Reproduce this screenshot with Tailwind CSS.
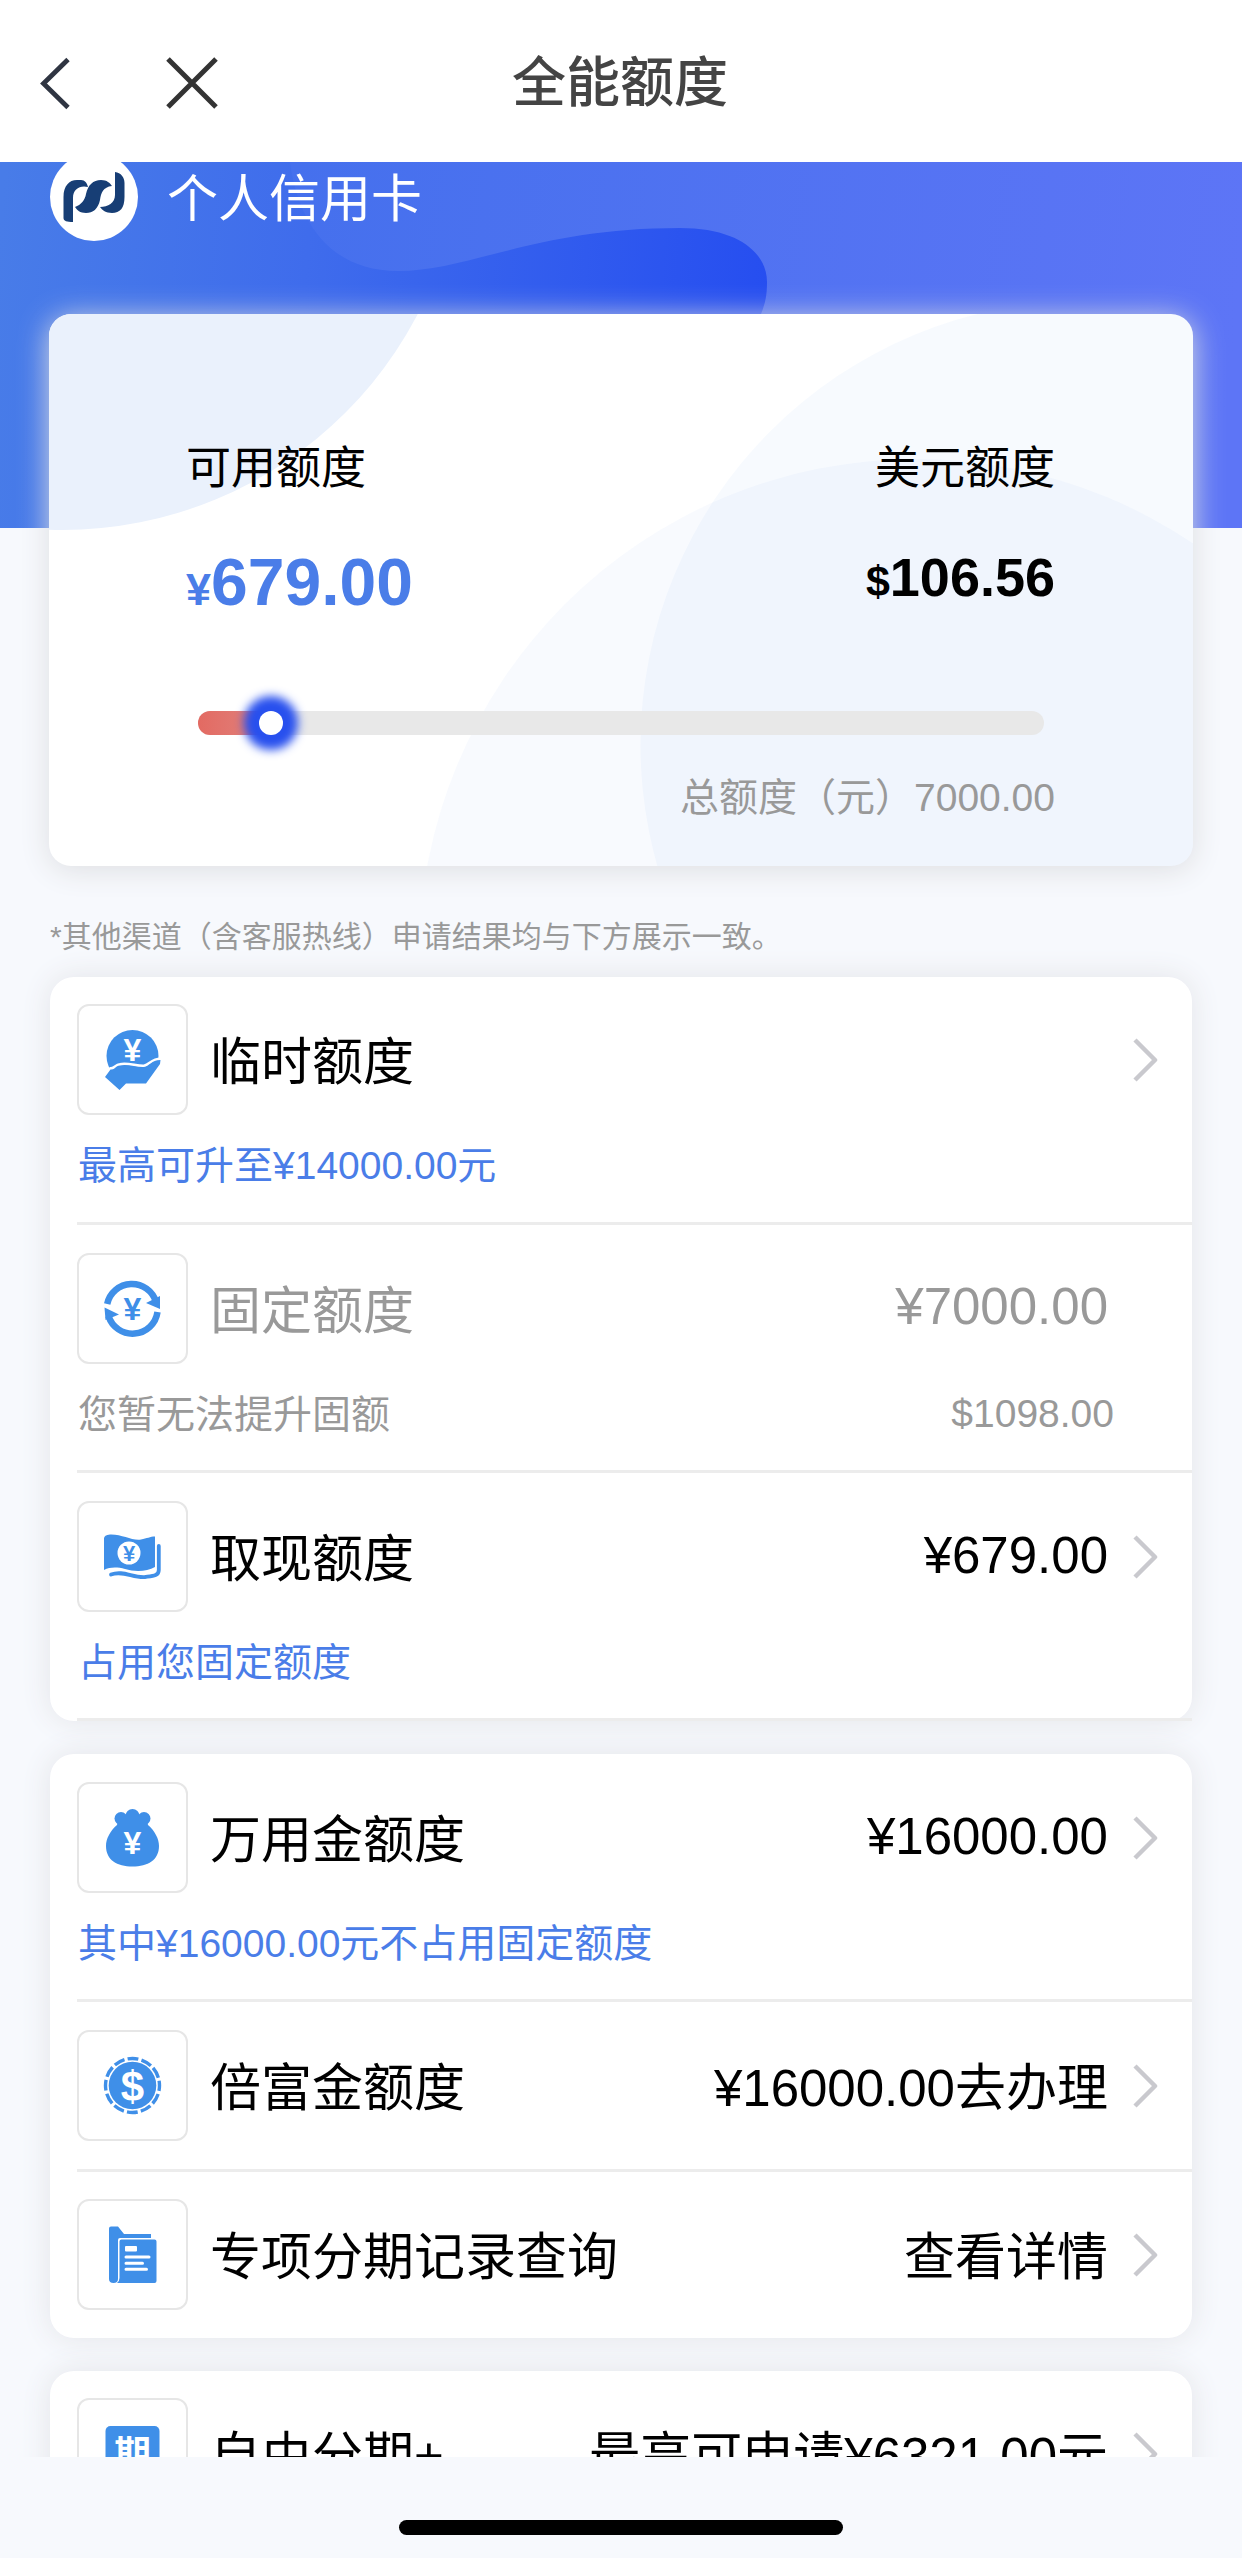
<!DOCTYPE html>
<html lang="zh-CN">
<head>
<meta charset="utf-8">
<title>全能额度</title>
<script src="https://cdn.jsdelivr.net/npm/@tailwindcss/browser@4"></script>
</head>
<body class="h-[2558px] w-[1242px] overflow-hidden bg-[#f7f9fd] font-['Liberation_Sans','Noto_Sans_CJK_SC',sans-serif] text-black">

<!-- Navigation bar -->
<header class="grid h-[162px] grid-cols-3 items-center bg-white pt-[4px]">
  <div class="flex items-center pl-[38px]">
    <svg width="34" height="56" viewBox="0 0 34 56" fill="none" stroke="#2f3542" stroke-width="4.800"><path d="M30 4.500 5.500 28.500 30 52.500"/></svg>
    <svg class="ml-[92px]" width="56" height="56" viewBox="0 0 56 56" fill="none" stroke="#333" stroke-width="5"><path d="M4 4 52 52M52 4 4 52"/></svg>
  </div>
  <h1 class="pr-[2px] text-center text-[54px] leading-[64px] font-medium text-[#444]">全能额度</h1>
</header>

<main class="relative h-[2295px] overflow-hidden">
  <!-- Blue banner behind the summary card -->
  <svg class="absolute top-0 left-0" width="1242" height="366" viewBox="0 0 1242 366">
    <defs>
      <linearGradient id="base" gradientUnits="userSpaceOnUse" x1="0" y1="60" x2="770" y2="120">
        <stop offset="0" stop-color="#487ce8"/><stop offset=".4" stop-color="#3f6cec"/><stop offset="1" stop-color="#264ef0"/>
      </linearGradient>
      <linearGradient id="wave" gradientUnits="userSpaceOnUse" x1="290" y1="0" x2="1242" y2="120">
        <stop offset="0" stop-color="#4570ed"/><stop offset="1" stop-color="#5d75f6"/>
      </linearGradient>
    </defs>
    <rect width="1242" height="366" fill="url(#base)"/>
    <path fill="url(#wave)" d="M290 0C298 60 330 109 398 109 470 109 535 66 680 66 740 66 767 92 767 120 767 135 765 142 761 152L740 366H1242V0Z"/>
  </svg>

  <section class="relative px-[49px]">
    <div class="-mt-[9px] flex h-[88px] items-center">
      <svg class="ml-[1px]" width="88" height="88" viewBox="0 0 88 88">
        <circle cx="44" cy="44" r="44" fill="#fff"/>
        <g fill="#173e75">
          <path d="M13.500 65V44C13.500 33 19 27 27 27H31C35 27 37 30 38 34 30 32 23 36 23 45V69C17 69 13.500 68 13.500 65Z"/>
          <path d="M25 54C31 52 35 47 36 41 38 32 43 27 51 27 57 27 60 30 62 33 53 34 51 40 50 47 48 56 43 60 36 60 30 60 27 57 25 54Z"/>
          <path d="M65 19C71 20 74.500 24 74.500 30V44C74.500 55 70 60 62 60 56 60 52 57 50 54 58 54 65 50 65 42Z"/>
        </g>
      </svg>
      <span class="pt-[6px] pl-[29px] text-[51px] leading-[60px] text-white">个人信用卡</span>
    </div>

    <div class="relative mt-[73px] h-[552px] rounded-[22px] bg-white pt-[125px] pr-[138px] pl-[137px] shadow-[0_4px_30px_#dddee1]">
      <svg class="absolute top-0 left-0 rounded-[22px]" width="1144" height="552" viewBox="49 314 1144 552">
        <circle cx="62" cy="129" r="401" fill="#eaf1fc"/>
        <circle cx="1084.500" cy="745" r="444" fill="#3278dc" fill-opacity=".04"/>
        <circle cx="916" cy="956" r="497" fill="#3278dc" fill-opacity=".034"/>
      </svg>
      <div class="relative">
        <div class="flex justify-between">
          <div>
            <p class="text-[45px] leading-[60px]">可用额度</p>
            <p class="mt-[43px] h-[80px] text-[66px] leading-[80px] font-bold text-[#4a7de8]"><span class="text-[45px] leading-none">¥</span>679.00</p>
          </div>
          <div class="text-right">
            <p class="text-[45px] leading-[60px]">美元额度</p>
            <p class="mt-[38px] h-[80px] text-[54px] leading-[80px] font-bold"><span class="text-[43px] leading-none">$</span>106.56</p>
          </div>
        </div>
        <div class="mt-[89px] mr-[11px] ml-[12px] flex h-[24px] items-center rounded-full bg-[#e8e8e8]">
          <div class="h-[24px] rounded-l-full bg-linear-to-r from-[#e36a62] to-[#df8480]" style="width:73px"></div>
          <div class="-ml-[12px] size-[24px] rounded-full bg-white shadow-[0_0_10px_15px_#2850ee]"></div>
        </div>
        <p class="mt-[33px] text-right text-[39px] leading-[60px] text-[#999]">总额度（元）7000.00</p>
      </div>
    </div>
  </section>

  <p class="relative mt-[51px] pl-[50px] text-[30px] leading-[40px] text-[#999]">*其他渠道（含客服热线）申请结果均与下方展示一致。</p>

  <!-- Quota list -->
  <section class="relative mx-[50px] mt-[20px] rounded-[24px] bg-white pl-[27px] shadow-[0_0_30px_#e3e4e8]">
    <article class="h-[248px] border-b-[3px] border-[#ececec] pt-[27px]">
      <div class="flex items-center pr-[34px]">
        <div class="size-[111px] rounded-[12px] border-2 border-[#e6e6e6]">
          <svg class="-m-[2px]" width="111" height="111" viewBox="0 0 111 111" fill="#3f8fe8">
            <circle cx="55.500" cy="52" r="26"/>
            <path fill="none" stroke="#fff" stroke-width="3" d="M28 71 33.500 64.500C38 65 38 61 43 60.500 50 58.500 60 62.500 67 62 73 61 74 55 84 55"/>
            <path d="M28 73 33.500 65.500C38 66 38 62 43 61.500 50 59.500 60 63.500 67 63 73 62 74 56 83.500 56L83 60 69 79.500H49L42.500 86Z"/>
            <text x="55.500" y="57" text-anchor="middle" font-size="32" font-weight="700" fill="#fff">¥</text>
          </svg>
        </div>
        <h2 class="pt-[6px] pl-[22px] text-[51px] leading-[60px]">临时额度</h2>
        <svg class="ml-auto" width="25" height="44" viewBox="0 0 25 44" fill="none" stroke="#c9c9ce" stroke-width="4.500" stroke-linejoin="round"><path d="M2 2 22 22 2 42"/></svg>
      </div>
      <p class="mt-[21px] pl-px text-[39px] leading-[60px] text-[#4a7de8]">最高可升至¥14000.00元</p>
    </article>

    <article class="h-[248px] border-b-[3px] border-[#ececec] pt-[28px] text-[#999]">
      <div class="flex items-center pr-[84px]">
        <div class="size-[111px] rounded-[12px] border-2 border-[#e6e6e6]">
          <svg class="-m-[2px]" width="111" height="111" viewBox="0 0 111 111" fill="#3f8fe8">
            <g fill="none" stroke="#3f8fe8" stroke-width="6.500">
              <path d="M30.200 51A25.200 25.200 0 0 1 79 49"/>
              <path d="M80.500 59A25.200 25.200 0 0 1 31.500 63"/>
            </g>
            <path d="M83 43V56L69 50Z"/><path d="M27.500 54.500 42 61.500 28.500 67Z"/>
            <text x="55.300" y="66.500" text-anchor="middle" font-size="32" font-weight="700">¥</text>
          </svg>
        </div>
        <h2 class="pt-[6px] pl-[22px] text-[51px] leading-[60px]">固定额度</h2>
        <span class="ml-auto pb-[3px] text-[51px] leading-[60px]">¥7000.00</span>
      </div>
      <div class="mt-[21px] flex justify-between pr-[78px] pl-px text-[39px] leading-[60px]">
        <p>您暂无法提升固额</p>
        <span class="-mt-[1px]">$1098.00</span>
      </div>
    </article>

    <article class="h-[248px] border-b-[3px] border-[#ececec] pt-[28px]">
      <div class="flex items-center pr-[34px]">
        <div class="size-[111px] rounded-[12px] border-2 border-[#e6e6e6]">
          <svg class="-m-[2px]" width="111" height="111" viewBox="0 0 111 111" fill="#3f8fe8">
            <path d="M27 37.500Q27 34 33 33.500C45 33 55 40 64 38.500 70 37.500 73 35.500 78 35.500V66C70 70.500 58 71 48 68 40 66 33 66 27 69Z"/>
            <path fill="none" stroke="#3f8fe8" stroke-width="3.800" stroke-linecap="round" d="M34 73.500C46 69 56 77 68 76 76 75 81.800 75 81.800 69V45"/>
            <ellipse cx="52" cy="52" rx="11.500" ry="11.500" fill="#fff"/>
            <text x="52" y="60" text-anchor="middle" font-size="22" font-weight="700">¥</text>
          </svg>
        </div>
        <h2 class="pt-[6px] pl-[22px] text-[51px] leading-[60px]">取现额度</h2>
        <span class="ml-auto pr-[25px] pb-[2px] text-[51px] leading-[60px]">¥679.00</span>
        <svg width="25" height="44" viewBox="0 0 25 44" fill="none" stroke="#c9c9ce" stroke-width="4.500" stroke-linejoin="round"><path d="M2 2 22 22 2 42"/></svg>
      </div>
      <p class="mt-[21px] pl-px text-[39px] leading-[60px] text-[#4a7de8]">占用您固定额度</p>
    </article>
  </section>

  <section class="relative mx-[50px] mt-[33px] rounded-[24px] bg-white pl-[27px] shadow-[0_0_30px_#e3e4e8]">
    <article class="h-[248px] border-b-[3px] border-[#ececec] pt-[28px]">
      <div class="flex items-center pr-[34px]">
        <div class="size-[111px] rounded-[12px] border-2 border-[#e6e6e6]">
          <svg class="-m-[2px]" width="111" height="111" viewBox="0 0 111 111" fill="#3f8fe8">
            <circle cx="44" cy="36.500" r="6.500"/><circle cx="55.500" cy="34" r="7"/><circle cx="67" cy="36.500" r="6.500"/>
            <path d="M42 34H69L71 43C78 49 82 57 82 64 82 78 71 84.500 55.500 84.500 40 84.500 29 78 29 64 29 57 33 49 40 43Z"/>
            <text x="55.500" y="72" text-anchor="middle" font-size="32" font-weight="700" fill="#fff">¥</text>
          </svg>
        </div>
        <h2 class="pt-[6px] pl-[22px] text-[51px] leading-[60px]">万用金额度</h2>
        <span class="ml-auto pr-[25px] pb-[2px] text-[51px] leading-[60px]">¥16000.00</span>
        <svg width="25" height="44" viewBox="0 0 25 44" fill="none" stroke="#c9c9ce" stroke-width="4.500" stroke-linejoin="round"><path d="M2 2 22 22 2 42"/></svg>
      </div>
      <p class="mt-[21px] pl-px text-[39px] leading-[60px] text-[#4a7de8]">其中¥16000.00元不占用固定额度</p>
    </article>

    <article class="h-[170px] border-b-[3px] border-[#ececec] pt-[28px]">
      <div class="flex items-center pr-[34px]">
        <div class="size-[111px] rounded-[12px] border-2 border-[#e6e6e6]">
          <svg class="-m-[2px]" width="111" height="111" viewBox="0 0 111 111" fill="#3f8fe8">
            <circle cx="55.500" cy="55.500" r="23.800"/>
            <circle cx="55.500" cy="55.500" r="27" fill="none" stroke="#3f8fe8" stroke-width="3.400" stroke-dasharray="11 3.137" stroke-dashoffset="5.500"/>
            <text x="55.500" y="70.500" text-anchor="middle" font-size="42" font-weight="700" fill="#fff">$</text>
          </svg>
        </div>
        <h2 class="pt-[6px] pl-[22px] text-[51px] leading-[60px]">倍富金额度</h2>
        <span class="ml-auto pt-[6px] pr-[25px] text-[51px] leading-[60px]">¥16000.00去办理</span>
        <svg width="25" height="44" viewBox="0 0 25 44" fill="none" stroke="#c9c9ce" stroke-width="4.500" stroke-linejoin="round"><path d="M2 2 22 22 2 42"/></svg>
      </div>
    </article>

    <article class="h-[166px] pt-[27px]">
      <div class="flex items-center pr-[34px]">
        <div class="size-[111px] rounded-[12px] border-2 border-[#e6e6e6]">
          <svg class="-m-[2px]" width="111" height="111" viewBox="0 0 111 111" fill="#3f8fe8">
            <path d="M32 29.500Q32 27.500 34 27.500H41L47 35H74V39H43Q41 39 41 41V80Q41 84 36.500 84 32 84 32 80Z"/>
            <path d="M42.500 42.500Q42.500 40.500 44.500 40.500H77.500Q79.500 40.500 79.500 42.500V82Q79.500 84 77.500 84H40Q42.500 82 42.500 79Z"/>
            <rect x="48" y="47" width="12" height="5.500" rx="1" fill="#fff"/>
            <path stroke="#fff" stroke-width="3" stroke-linecap="round" d="M49 58H72M49 64.300H65.500M49 70.300H69.500"/>
          </svg>
        </div>
        <h2 class="pt-[6px] pl-[22px] text-[51px] leading-[60px]">专项分期记录查询</h2>
        <span class="ml-auto pt-[6px] pr-[25px] text-[51px] leading-[60px]">查看详情</span>
        <svg width="25" height="44" viewBox="0 0 25 44" fill="none" stroke="#c9c9ce" stroke-width="4.500" stroke-linejoin="round"><path d="M2 2 22 22 2 42"/></svg>
      </div>
    </article>
  </section>

  <section class="relative mx-[50px] mt-[33px] rounded-[24px] bg-white pl-[27px] shadow-[0_0_30px_#e3e4e8]">
    <article class="h-[166px] pt-[27px]">
      <div class="flex items-center pr-[34px]">
        <div class="size-[111px] rounded-[12px] border-2 border-[#e6e6e6]">
          <svg class="-m-[2px]" width="111" height="111" viewBox="0 0 111 111" fill="#3f8fe8">
            <rect x="28.500" y="28" width="54" height="54" rx="5"/>
            <text x="55.500" y="69.500" text-anchor="middle" font-size="37" font-weight="700" fill="#fff">期</text>
          </svg>
        </div>
        <h2 class="pt-[6px] pl-[22px] text-[51px] leading-[60px]">自由分期+</h2>
        <span class="ml-auto pt-[6px] pr-[25px] text-[51px] leading-[60px]">最高可申请¥6321.00元</span>
        <svg width="25" height="44" viewBox="0 0 25 44" fill="none" stroke="#c9c9ce" stroke-width="4.500" stroke-linejoin="round"><path d="M2 2 22 22 2 42"/></svg>
      </div>
    </article>
  </section>
</main>

<!-- Home indicator -->
<footer class="flex h-[101px] justify-center pt-[63px]">
  <div class="h-[15px] w-[444px] rounded-full bg-black"></div>
</footer>

</body>
</html>
